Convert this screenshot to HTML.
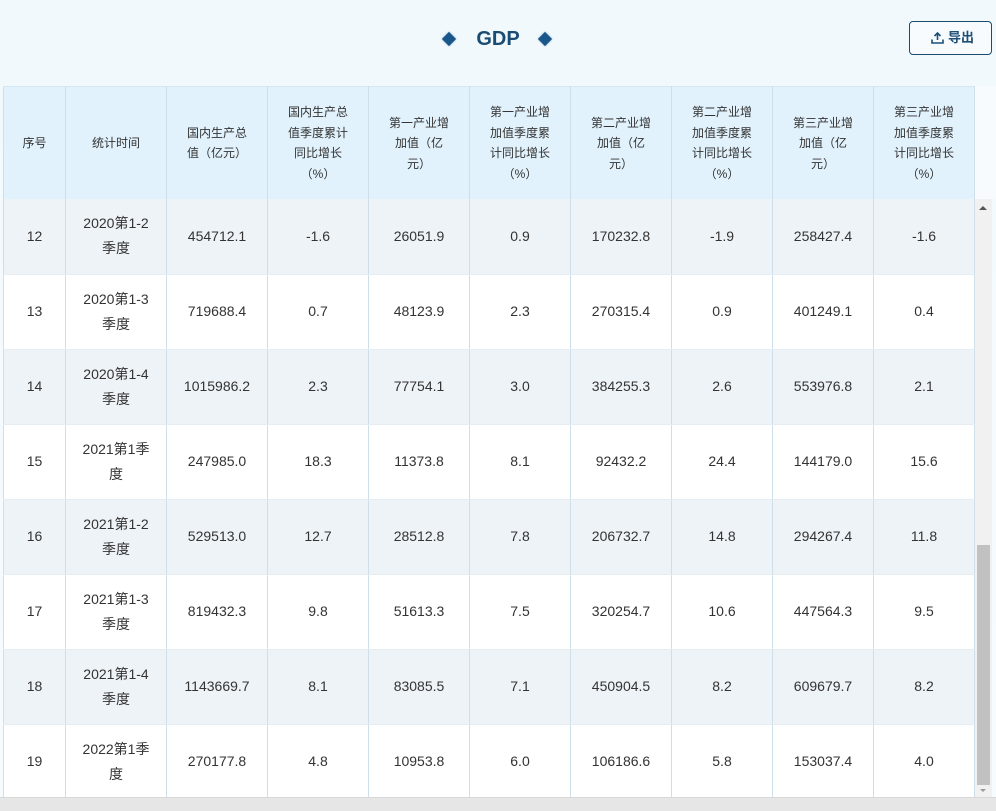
<!DOCTYPE html>
<html><head><meta charset="utf-8"><style>
*{margin:0;padding:0;box-sizing:border-box}
body{width:996px;height:811px;overflow:hidden;background:linear-gradient(#f2f9fd,#f6fbfe);font-family:"Liberation Sans","Noto Sans CJK SC",sans-serif;position:relative}
.title{position:absolute;top:27px;left:0;width:996px;text-align:center;font-size:20px;font-weight:bold;color:#1b4d74;line-height:24px}
.dia{position:absolute;top:34px;width:10px;height:10px;background:#1a5689;transform:rotate(45deg);box-shadow:0 0 2px #6f9fc6}
.btn{position:absolute;left:909px;top:21px;width:83px;height:34px;border:1px solid #1c4c6c;border-radius:4px;background:#f7fbfe;color:#1d4f75;font-size:13px;font-weight:bold;line-height:32px;text-align:center;padding-left:4px}
.btn svg{vertical-align:-2px;margin-right:4px}
table{position:absolute;left:3px;top:86px;border-collapse:collapse;table-layout:fixed;width:971px}
td,th{border-right:1px solid #cfdfe9;text-align:center;vertical-align:middle}
th{height:113px;background:#e1f2fc;font-size:12px;font-weight:normal;color:#333;line-height:20.5px;padding:0 19px;border-top:1px solid #d7e7f1}
th:first-child{padding:0 4px}
td{height:75px;font-size:14px;color:#333;line-height:25px;border-bottom:1px solid #e6edf2;padding:0 6px}
td:nth-child(2){padding:0 16px}
tr.g td{background:#eef3f8}
tr.w td{background:#fff}
td:first-child,th:first-child{border-left:1px solid #cfdfe9}
.wrap{position:absolute;left:0;top:199px;width:996px;height:598px;overflow:hidden}
.sb{position:absolute;left:975px;top:199px;width:17px;height:598px;background:#f1f1f1}
.thumb{position:absolute;left:977px;top:545px;width:13px;height:240px;background:#c1c1c1}
.hb{position:absolute;left:0;top:797px;width:996px;height:14px;background:#e6e6e6;border-top:1px solid #d8d8d8}
.hd{position:absolute;left:975px;top:86px;width:21px;height:113px;background:#f7fbfe}
</style></head><body>
<div class="dia" style="left:444px"></div>
<div class="title">GDP</div>
<div class="dia" style="left:540px"></div>
<div class="btn"><svg width="13" height="13" viewBox="0 0 13 13" fill="none" stroke="#1d4f75" stroke-width="1.6"><path d="M6.5 9V2M3.5 5l3-3 3 3M1 8.5V12h11V8.5"/></svg>导出</div>
<table>
<colgroup><col style="width:62px"><col style="width:101px"><col style="width:101px"><col style="width:101px"><col style="width:101px"><col style="width:101px"><col style="width:101px"><col style="width:101px"><col style="width:101px"><col style="width:101px"></colgroup>
<tr><th>序号</th><th>统计时间</th><th>国内生产总值（亿元）</th><th>国内生产总值季度累计同比增长（%）</th><th>第一产业增加值（亿元）</th><th>第一产业增加值季度累计同比增长（%）</th><th>第二产业增加值（亿元）</th><th>第二产业增加值季度累计同比增长（%）</th><th>第三产业增加值（亿元）</th><th>第三产业增加值季度累计同比增长（%）</th></tr>
</table>
<div class="hd"></div>
<div class="wrap"><table style="top:0">
<colgroup><col style="width:62px"><col style="width:101px"><col style="width:101px"><col style="width:101px"><col style="width:101px"><col style="width:101px"><col style="width:101px"><col style="width:101px"><col style="width:101px"><col style="width:101px"></colgroup>
<tr class="g"><td>12</td><td>2020第1-2季度</td><td>454712.1</td><td>-1.6</td><td>26051.9</td><td>0.9</td><td>170232.8</td><td>-1.9</td><td>258427.4</td><td>-1.6</td></tr>
<tr class="w"><td>13</td><td>2020第1-3季度</td><td>719688.4</td><td>0.7</td><td>48123.9</td><td>2.3</td><td>270315.4</td><td>0.9</td><td>401249.1</td><td>0.4</td></tr>
<tr class="g"><td>14</td><td>2020第1-4季度</td><td>1015986.2</td><td>2.3</td><td>77754.1</td><td>3.0</td><td>384255.3</td><td>2.6</td><td>553976.8</td><td>2.1</td></tr>
<tr class="w"><td>15</td><td>2021第1季度</td><td>247985.0</td><td>18.3</td><td>11373.8</td><td>8.1</td><td>92432.2</td><td>24.4</td><td>144179.0</td><td>15.6</td></tr>
<tr class="g"><td>16</td><td>2021第1-2季度</td><td>529513.0</td><td>12.7</td><td>28512.8</td><td>7.8</td><td>206732.7</td><td>14.8</td><td>294267.4</td><td>11.8</td></tr>
<tr class="w"><td>17</td><td>2021第1-3季度</td><td>819432.3</td><td>9.8</td><td>51613.3</td><td>7.5</td><td>320254.7</td><td>10.6</td><td>447564.3</td><td>9.5</td></tr>
<tr class="g"><td>18</td><td>2021第1-4季度</td><td>1143669.7</td><td>8.1</td><td>83085.5</td><td>7.1</td><td>450904.5</td><td>8.2</td><td>609679.7</td><td>8.2</td></tr>
<tr class="w"><td>19</td><td>2022第1季度</td><td>270177.8</td><td>4.8</td><td>10953.8</td><td>6.0</td><td>106186.6</td><td>5.8</td><td>153037.4</td><td>4.0</td></tr>
</table></div>
<div class="sb"></div>
<div style="position:absolute;left:979px;top:206px;width:0;height:0;border-left:4px solid transparent;border-right:4px solid transparent;border-bottom:4px solid #555"></div>
<div class="thumb"></div>
<div style="position:absolute;left:980px;top:789px;width:0;height:0;border-left:3px solid transparent;border-right:3px solid transparent;border-top:3px solid #999"></div>
<div class="hb"></div>
</body></html>
